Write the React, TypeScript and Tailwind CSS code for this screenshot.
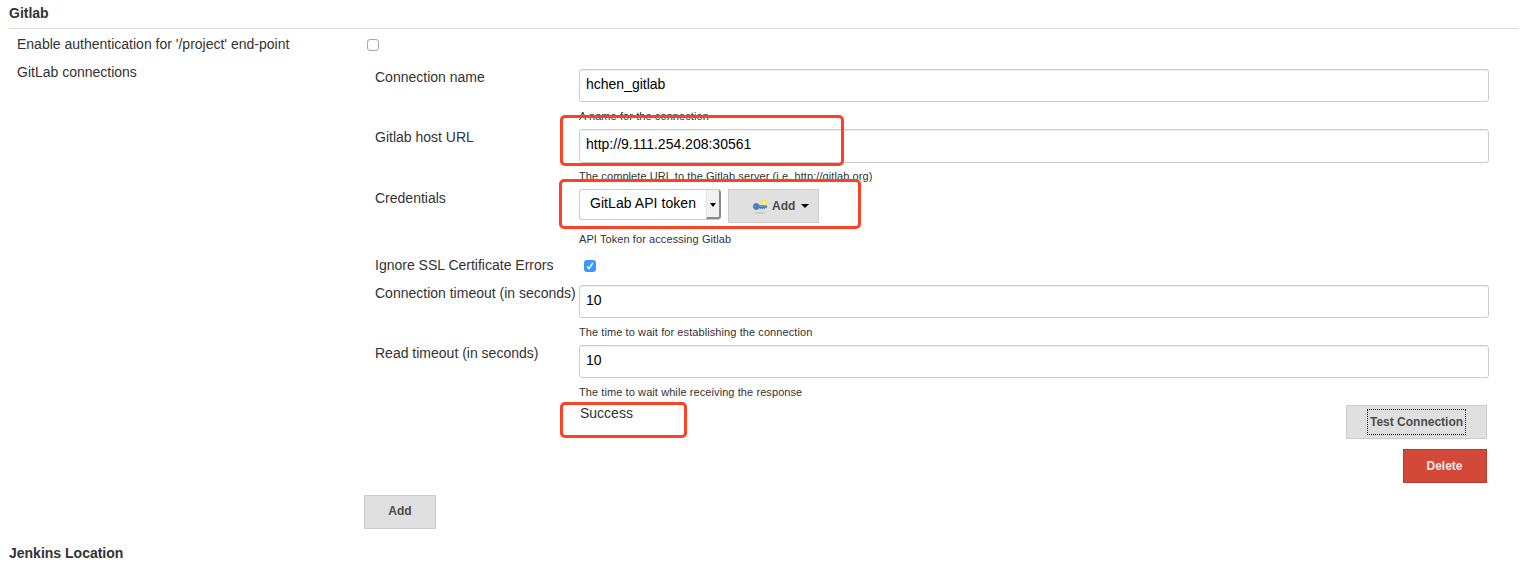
import type { ReactNode } from "react";

function TextField({ value, tall = false }: { value: string; tall?: boolean }) {
  return (
    <div
      className={`${tall ? "h-[34px]" : "h-[33px]"} w-[910px] rounded-[3px] border border-[#ccc] bg-white pl-[6px] pt-[4px] text-black shadow-[inset_0_1px_1px_rgba(0,0,0,0.075)]`}
    >
      {value}
    </div>
  );
}

function Row({ label, height, children }: { label: string; height: string; children: ReactNode }) {
  return (
    <div className={`flex ${height}`}>
      <div className="w-[204px] shrink-0 whitespace-nowrap">{label}</div>
      <div>{children}</div>
    </div>
  );
}

function Help({ children, className = "mt-[6px]" }: { children: ReactNode; className?: string }) {
  return <div className={`${className} text-[11px] leading-4 tracking-[0.085px] whitespace-nowrap`}>{children}</div>;
}

function KeyIcon() {
  return (
    <svg width="16" height="16" viewBox="0 0 16 16">
      <ellipse cx="8" cy="15" rx="5.500" ry="0.900" fill="#c6c6c6" />
      <path
        d="M4.400 5.200C2.400 5.200 1.200 6.600 1.200 8.400s1.300 3.200 3.200 3.200c1.300 0 2.200-.6 2.700-1.600h1l.7.9.9-.8.9.8.9-.8.9.6 1-.9h1l.8-1-.9-1.300H7.300C6.700 6 5.700 5.200 4.400 5.200z"
        fill="#4a7dbd"
        stroke="#4474b0"
        strokeWidth="0.5"
      />
      <path d="M7 8.300h7" stroke="#7ba3d3" strokeWidth="0.7" />
      <circle cx="3.300" cy="8.500" r="0.800" fill="#b9cbe2" stroke="#2d5b96" strokeWidth="0.4" />
      <path d="M12 1.500l.9 1.100 1.400-.3v1.400l1.200.8-1.200.9v1.400l-1.400-.3-.9 1.100-.9-1.100-1.400.3V5.400l-1.200-.9 1.200-.8V2.300l1.400.3z" fill="#f7e63c" />
      <circle cx="12" cy="4.500" r="1.200" fill="#fffba8" />
    </svg>
  );
}

function Caret({ className }: { className: string }) {
  return (
    <svg className={className} viewBox="0 0 8 4" preserveAspectRatio="none">
      <path d="M0 0h8L4 4z" fill="#000" />
    </svg>
  );
}

export default function App() {
  return (
    <div className="relative h-[564px] w-[1531px] overflow-hidden bg-white font-['Liberation_Sans',Arial,sans-serif] text-[14px] leading-5 text-[#333]">
      <h2 className="ml-[9px] h-[29px] w-[1509px] border-b border-[#ddd] pt-[3px] font-bold">Gitlab</h2>

      <div className="flex h-[33px] pl-[17px] pt-[5px]">
        <div className="w-[350px]">Enable authentication for '/project' end-point</div>
        <div className="mt-[5px] size-3 rounded-[3px] border border-[#a6a6a6] bg-white" />
      </div>

      <div className="flex pl-[17px]">
        <div className="w-[347px] shrink-0">GitLab connections</div>
        <div className="w-[1125px] pt-[5px]">
          <div className="pl-[11px]">
            <Row label="Connection name" height="h-[60px]">
              <div className="pt-[2px]">
                <TextField value="hchen_gitlab" />
                <Help>A name for the connection</Help>
              </div>
            </Row>
            <Row label="Gitlab host URL" height="h-[61px]">
              <div className="pt-[2px]">
                <TextField value="http://9.111.254.208:30561" tall />
                <Help className="mt-[5px]">The complete URL to the Gitlab server (i.e. http://gitlab.org)</Help>
              </div>
            </Row>
            <Row label="Credentials" height="h-[67px]">
              <div className="pt-px">
                <div className="flex items-start">
                  <div className="flex h-[31px] w-[142px] rounded-[3px] border border-r-0 border-[#ccc] bg-white text-black">
                    <div className="flex-1 pl-[10px] pt-[3px] tracking-[0.06px] whitespace-nowrap">GitLab API token</div>
                    <div className="flex w-[15px] items-center justify-center rounded-r-[3px] border-r-2 border-b-2 border-l border-r-[#888] border-b-[#888] border-l-[#e5e5e5] bg-[#f1f1f1]">
                      <Caret className="mt-[2px] h-[4px] w-[6px]" />
                    </div>
                  </div>
                  <div className="ml-[7px] flex h-[34px] w-[91px] items-center border border-[#ccc] bg-[#e0e0e0] pl-[23px] text-[12px] font-bold text-[#4d4d4d]">
                    <KeyIcon />
                    <span className="ml-[4px]">Add</span>
                    <Caret className="ml-[6px] h-[4px] w-[8px]" />
                  </div>
                </div>
                <Help className="mt-[8px]">API Token for accessing Gitlab</Help>
              </div>
            </Row>
            <Row label="Ignore SSL Certificate Errors" height="h-[28px]">
              <div className="mt-[5px] ml-[5px] flex size-3 items-center justify-center rounded-[3px] bg-[#3b99fc]">
                <svg width="8" height="8" viewBox="0 0 8 8">
                  <path d="M1 4.400l2 2.200L6.800 1" fill="none" stroke="#fff" strokeWidth="1.500" />
                </svg>
              </div>
            </Row>
            <Row label="Connection timeout (in seconds)" height="h-[60px]">
              <div className="pt-[2px]">
                <TextField value="10" />
                <Help>The time to wait for establishing the connection</Help>
              </div>
            </Row>
            <Row label="Read timeout (in seconds)" height="h-[60px]">
              <div className="pt-[2px]">
                <TextField value="10" />
                <Help>The time to wait while receiving the response</Help>
              </div>
            </Row>
          </div>

          <div className="flex h-[46px] justify-between pr-[2px] pl-[216px]">
            <div>Success</div>
            <div className="mt-[2px] flex h-[34px] w-[141px] items-center justify-center border border-[#ccc] bg-[#e0e0e0] text-[12px] font-bold text-[#4d4d4d]">
              <span className="flex h-[26px] w-[99px] items-center justify-center border border-dotted border-black whitespace-nowrap">
                Test Connection
              </span>
            </div>
          </div>
          <div className="flex h-[46px] justify-end pr-[2px]">
            <div className="flex h-[34px] w-[84px] items-center justify-center border border-[#b83c2d] bg-[#d24939] pr-px text-[12px] font-bold text-[#f3e6e4]">
              Delete
            </div>
          </div>
          <div className="flex h-[34px] w-[72px] items-center justify-center border border-[#ccc] bg-[#e0e0e0] pb-[2px] text-[12px] font-bold text-[#4d4d4d]">
            Add
          </div>
        </div>
      </div>

      <h2 className="mt-[14px] ml-[9px] font-bold">Jenkins Location</h2>

      <div className="absolute top-[115px] left-[560px] h-[51px] w-[284px] rounded-[5px] border-3 border-[#fc4125]" />
      <div className="absolute top-[179px] left-[558.5px] h-[50px] w-[302.5px] rounded-[5px] border-3 border-[#fc4125]" />
      <div className="absolute top-[402px] left-[560px] h-[36px] w-[127px] rounded-[5px] border-3 border-[#fc4125]" />
    </div>
  );
}
